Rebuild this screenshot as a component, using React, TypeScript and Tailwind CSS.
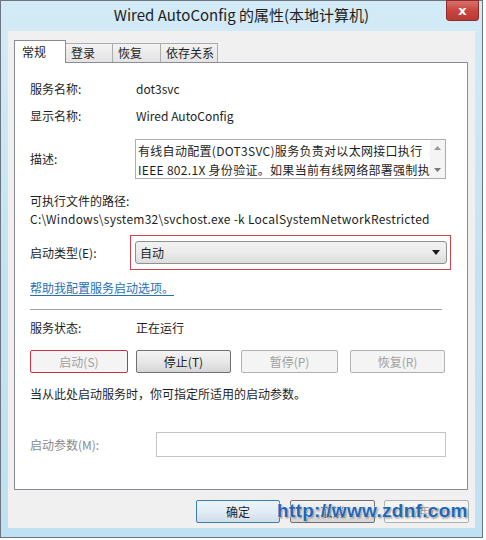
import React from "react";

const font = "font-['Microsoft_YaHei','Noto_Sans_CJK_SC',sans-serif]";

const Tab = ({ label, active, w }: { label: string; active?: boolean; w: string }) =>
  active ? (
    <div
      className={`${w} h-[23px] -mb-px relative z-10 bg-white border border-b-0 border-[#898c95] pl-[7px] text-[12px] leading-[21px] text-[#1e1e1e]`}
    >
      {label}
    </div>
  ) : (
    <div
      className={`${w} h-[19px] -ml-px bg-gradient-to-b from-[#f3f3f3] to-[#e3e3e3] border border-b-0 border-[#acacac] pl-[5px] text-[12px] leading-[18px] text-[#1e1e1e]`}
    >
      {label}
    </div>
  );

const Btn = ({
  label,
  w,
  disabled,
  ring,
  primary,
}: {
  label: string;
  w: string;
  disabled?: boolean;
  ring?: boolean;
  primary?: boolean;
}) => {
  let cls = "bg-gradient-to-b from-[#f3f3f3] via-[#e8e8e8] to-[#d6d6d6] border-[#707070] text-[#1e1e1e]";
  if (disabled) cls = "bg-[#f4f4f4] border-[#adb2b5] text-[#a0a0a0]";
  if (ring) cls = "bg-[#f4f4f4] border-[#c0353f] text-[#a0a0a0]";
  if (primary) cls = "bg-gradient-to-b from-[#eaf4fb] via-[#e2edf5] to-[#cfdde8] border-[#3c7fb1] text-[#1e1e1e]";
  return (
    <div
      className={`${w} h-[23px] rounded-[2px] border ${cls} flex items-center justify-center text-[12px]`}
    >
      {label}
    </div>
  );
};

export default function App() {
  return (
    <div className={`w-[486px] h-[540px] bg-white overflow-hidden ${font}`}>
      <div className="w-[483px] h-[538px] border border-[#6b7680] bg-gradient-to-b from-[#d3ebf7] via-[#c4e3f2] to-[#c0e1f1] flex flex-col relative">
        {/* title bar */}
        <div className="h-[30px] flex items-center justify-center text-[15px] text-[#1e1e1e] relative">
          <span className="-mt-[2px]">Wired AutoConfig 的属性(本地计算机)</span>
          <div className="absolute right-[3px] top-[-1px] w-[33px] h-[21px] rounded-b-[3px] border border-[#8e2a2a] bg-gradient-to-b from-[#d9716a] via-[#c9463f] to-[#b93a33] flex items-center justify-center">
            <span className="text-white font-bold text-[13px] leading-none font-['DejaVu_Sans',sans-serif]">x</span>
          </div>
        </div>

        {/* client */}
        <div className="ml-[7px] w-[467px] h-[497px] bg-[#f0f0f0] pt-[9px] pl-[6px] flex flex-col">
          {/* tabs */}
          <div className="flex items-end h-[22px]">
            <Tab label="常规" active w="w-[52px]" />
            <Tab label="登录" w="w-[48px]" />
            <Tab label="恢复" w="w-[49px]" />
            <Tab label="依存关系" w="w-[58px]" />
          </div>

          {/* panel */}
          <div className="w-[454px] h-[428px] bg-white border border-[#898c95] pl-[15px] text-[12px] text-[#1e1e1e] flex flex-col">
            <div className="mt-[16px] h-[20px] flex items-center">
              <span className="w-[106px]">服务名称:</span>
              <span>dot3svc</span>
            </div>
            <div className="mt-[7px] h-[20px] flex items-center">
              <span className="w-[106px]">显示名称:</span>
              <span>Wired AutoConfig</span>
            </div>
            <div className="mt-[13px] h-[40px] flex items-center">
              <span className="w-[105px]">描述:</span>
              <div className="w-[311px] h-[40px] border border-[#abadb3] flex">
                <div className="flex-1 pl-[2px] pt-[1px] text-[12px] leading-[19px] whitespace-nowrap overflow-hidden tracking-[0.3px]">
                  <div>有线自动配置(DOT3SVC)服务负责对以太网接口执行</div>
                  <div>IEEE 802.1X 身份验证。如果当前有线网络部署强制执</div>
                </div>
                <div className="w-[15px] bg-[#f4f4f4] flex flex-col items-center justify-between py-[6px]">
                  <svg width="7" height="4" viewBox="0 0 7 4">
                    <path d="M0 4 L3.5 0 L7 4 Z" fill="#9a9a9a" />
                  </svg>
                  <svg width="7" height="4" viewBox="0 0 7 4">
                    <path d="M0 0 L3.5 4 L7 0 Z" fill="#7a7a7a" />
                  </svg>
                </div>
              </div>
            </div>
            <div className="mt-[13px] h-[18px] flex items-center">可执行文件的路径:</div>
            <div className="h-[18px] flex items-center tracking-[0.25px]">
              C:\Windows\system32\svchost.exe -k LocalSystemNetworkRestricted
            </div>
            <div className="mt-[7px] h-[35px] flex items-center">
              <span className="w-[100px]">启动类型(E):</span>
              <div className="w-[321px] h-[35px] border border-[#d0434c] pl-[4px] pr-[3px] flex items-center">
                <div className="w-[312px] h-[23px] rounded-[3px] border border-[#8e8f8f] bg-gradient-to-b from-[#f2f2f2] via-[#ebebeb] to-[#dcdcdc] flex items-center justify-between pl-[4px] pr-[6px]">
                  <span>自动</span>
                  <svg width="8" height="5" viewBox="0 0 8 5">
                    <path d="M0 0 L8 0 L4 5 Z" fill="#1a1a1a" />
                  </svg>
                </div>
              </div>
            </div>
            <div className="mt-[9px] h-[18px] flex items-center">
              <span className="text-[#2a6fb5] underline underline-offset-2">帮助我配置服务启动选项。</span>
            </div>
            <div className="mt-[12px] w-[412px] h-px bg-[#a0a0a0]" />
            <div className="mt-[9px] h-[18px] flex items-center">
              <span className="w-[106px]">服务状态:</span>
              <span>正在运行</span>
            </div>
            <div className="mt-[13px] flex items-center">
              <Btn label="启动(S)" w="w-[98px]" ring />
              <div className="w-[8px]" />
              <Btn label="停止(T)" w="w-[95px]" />
              <div className="w-[10px]" />
              <Btn label="暂停(P)" w="w-[97px]" disabled />
              <div className="w-[12px]" />
              <Btn label="恢复(R)" w="w-[95px]" disabled />
            </div>
            <div className="mt-[12px] h-[18px] flex items-center">
              当从此处启动服务时，你可指定所适用的启动参数。
            </div>
            <div className="mt-[29px] h-[25px] flex items-center">
              <span className="w-[126px] text-[#8a8a8a]">启动参数(M):</span>
              <div className="w-[290px] h-[25px] border border-[#c4c4c4] bg-white" />
            </div>
          </div>

          {/* bottom buttons */}
          <div className="mt-[10px] flex items-center pl-[182px] relative">
            <Btn label="确定" w="w-[84px]" primary />
            <div className="w-[10px]" />
            <Btn label="取消" w="w-[85px]" />
            <div className="w-[9px]" />
            <Btn label="应用(A)" w="w-[85px]" disabled />
            <div className="absolute left-[263px] top-[-1px] text-[19px] leading-[24px] font-bold text-[#2367b4] tracking-[0.3px] font-['Liberation_Sans',sans-serif] [text-shadow:0_0_2px_#fff,0_0_2px_#fff,1px_1px_2px_#555]">
              http://www.zdnf.com
            </div>
          </div>
        </div>
      </div>
    </div>
  );
}
